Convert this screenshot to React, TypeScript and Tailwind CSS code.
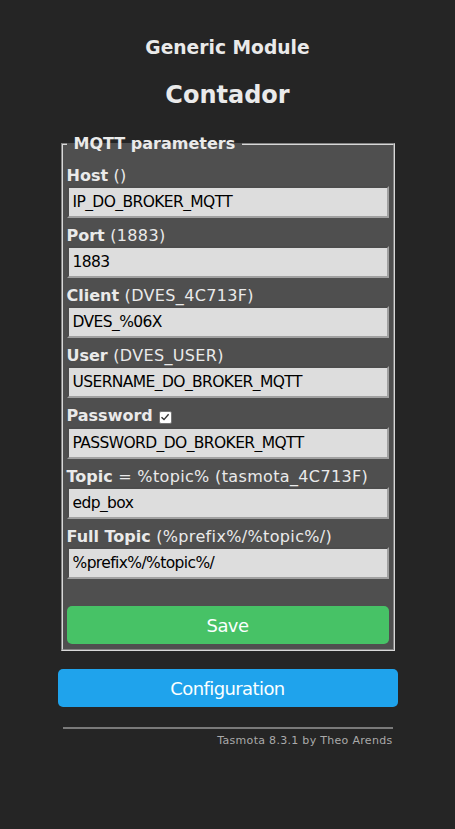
import { useState } from 'react'

interface Field {
  id: string
  label: string
  hint: string
  value: string
  checkbox?: boolean
}

const fields: Field[] = [
  { id: 'mh', label: 'Host', hint: ' ()', value: 'IP_DO_BROKER_MQTT' },
  { id: 'ml', label: 'Port', hint: ' (1883)', value: '1883' },
  { id: 'mc', label: 'Client', hint: ' (DVES_4C713F)', value: 'DVES_%06X' },
  { id: 'mu', label: 'User', hint: ' (DVES_USER)', value: 'USERNAME_DO_BROKER_MQTT' },
  { id: 'mp', label: 'Password', hint: '', value: 'PASSWORD_DO_BROKER_MQTT', checkbox: true },
  { id: 'mt', label: 'Topic', hint: ' = %topic% (tasmota_4C713F)', value: 'edp_box' },
  { id: 'mf', label: 'Full Topic', hint: ' (%prefix%/%topic%/)', value: '%prefix%/%topic%/' },
]

function Check() {
  return (
    <span className="inline-flex items-center justify-center w-[13px] h-[13px] ml-[6px] bg-white border border-[#767676] rounded-[2px] align-[-1px]">
      <svg width="10" height="10" viewBox="0 0 10 10" fill="none">
        <path d="M1.5 5.2L4 7.6L8.6 2.2" stroke="#333" strokeWidth="1.4" />
      </svg>
    </span>
  )
}

export default function App() {
  const [values, setValues] = useState<Record<string, string>>(
    Object.fromEntries(fields.map((f) => [f.id, f.value]))
  )

  return (
    <div className="min-h-screen bg-[#252525] flex justify-center font-['DejaVu_Sans',Verdana,sans-serif] text-[#eaeaea]">
      <div className="w-[340px]">
        <h3 className="pt-[37px] text-center text-[18.7px] leading-[22px] font-bold">Generic Module</h3>
        <h2 className="mt-[22px] text-center text-[24px] leading-[28px] font-bold">Contador</h2>

        <fieldset className="mt-[25px] mx-[3px] border-2 [border-style:groove] border-[#d8d8d8] bg-[#4f4f4f] px-[4px] pb-[5px]">
          <legend className="px-[7px] text-[16px] leading-[19px] font-bold">MQTT parameters</legend>
          <div className="pt-[13px]">
            {fields.map((f, i) => (
              <div key={f.id} className={i === 0 ? '' : 'mt-[8px]'}>
                <div className={`text-[16px] leading-[20px] ${f.checkbox ? 'h-[21px]' : 'h-[20px]'}`}>
                  <b>{f.label}</b>
                  <span className="tracking-[0.35px]">{f.hint}</span>
                  {f.checkbox && <Check />}
                </div>
                <input
                  id={f.id}
                  value={values[f.id]}
                  onChange={(e) => setValues({ ...values, [f.id]: e.target.value })}
                  className="block w-full h-[32px] px-[4px] bg-[#dddddd] text-black text-[15.5px] tracking-[-0.6px] border-2 [border-style:inset] border-[#a0a0a0] outline-none"
                />
              </div>
            ))}
          </div>
          <button className="mt-[27px] w-full h-[38px] rounded-[5px] bg-[#47c266] text-[#faffff] text-[18px] tracking-[-0.6px]">
            Save
          </button>
        </fieldset>

        <button className="mt-[18px] w-full h-[38px] rounded-[5px] bg-[#1fa3ec] text-[#faffff] text-[18px] tracking-[-0.6px] leading-[40px]">
          Configuration
        </button>

        <div className="mt-[20px] mx-[5px] border-t-2 border-[#7a7a7a]" />
        <div className="mt-[5px] pr-[5px] text-right text-[11px] leading-[13px] tracking-[0.3px] text-[#aaaaaa]">
          Tasmota 8.3.1 by Theo Arends
        </div>
      </div>
    </div>
  )
}
